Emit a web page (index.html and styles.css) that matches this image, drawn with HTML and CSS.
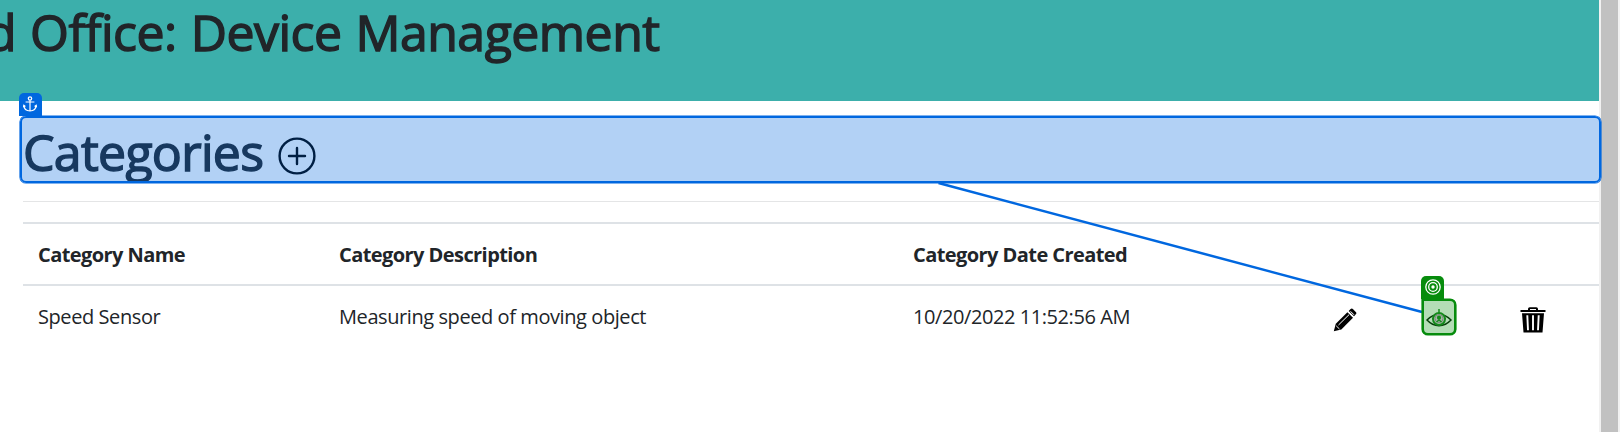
FILE: index.html
```html
<!DOCTYPE html>
<html lang="en">
<head>
<meta charset="utf-8">
<title>Device Management</title>
<link rel="stylesheet" href="styles.css">
</head>
<body>
<div class="window">
  <div class="page">
    <header class="banner"><h1 class="title">d Office: Device Management</h1></header>
    <main class="content">
      <div class="heading">
        <h1 class="subtitle">Categories</h1>
        <svg class="plus" viewBox="0 0 38 38"><circle cx="19" cy="19" r="17.4"/><path d="M19 11v16M11 19h16"/></svg>
      </div>
      <hr class="rule">
      <div class="table">
        <div class="row head">
          <span>Category Name</span><span>Category Description</span><span>Category Date Created</span>
        </div>
        <div class="row">
          <span>Speed Sensor</span><span>Measuring speed of moving object</span><span>10/20/2022 11:52:56 AM</span>
          <svg class="pencil" viewBox="0 0 24 24"><path d="M.8 23.300 2.800 15.800 14.400 4.200 20 9.800 8.300 21.400z"/><path d="m15.700 3 1.900-1.900c.8-.8 1.700-.7 2.500.1l2.700 2.700c.8.8.8 1.600 0 2.400L21 8.200z"/><path class="shine" d="M5.500 17 16 6.700M3.200 17.800l3.300 3.200M17.500 3.300l3.500 3.500"/></svg>
          <svg class="trash" viewBox="0 0 26 26"><path d="M.5 3H8V2q0-1.700 1.700-1.700h6.600Q18 .3 18 2v1h7.500v2H.5zM10 2v1h6V2zM2 6.300h22L22.500 25.500h-19z" fill-rule="evenodd"/><path class="slots" d="m7.300 8.300.7 15M13 8.300v15M18.700 8.300l-.7 15"/></svg>
        </div>
      </div>
    </main>
  </div>
  <div class="scrollbar"></div>
</div>
<svg class="connector" viewBox="0 0 1620 432"><path d="M938.500 183 1422 312"/></svg>
<div class="anchor-box"></div>
<div class="anchor-tag"><svg viewBox="0 0 14 16"><circle cx="7" cy="2.500" r="1.700"/><path d="M7 4.300V15M2.600 6h8.800M.8 9.300C1 13 3.800 15 7 15s6-2 6.200-5.700M.3 11.200l.5-2 1.600 1.300M13.700 11.200l-.5-2-1.600 1.300"/></svg></div>
<div class="target-box"><svg viewBox="0 0 26 20"><path class="eye" d="M1 11C8 3.500 18 3.500 25 11 18 18.500 8 18.500 1 11z"/><circle class="iris" cx="13" cy="10" r="6"/><circle class="ring" cx="13" cy="9.500" r="4"/><circle class="pupil" cx="13" cy="8.700" r="2.100"/><path class="cross" d="M13 0v4M6 9.500h2M18 9.500h2M10.500 13l2.500-2 2.500 2"/></svg></div>
<div class="target-tag"><svg viewBox="0 0 16 16"><circle cx="8" cy="8" r="7.200"/><circle cx="8" cy="8" r="4.300"/><circle class="dot" cx="8" cy="8" r="1.700"/></svg></div>
</body>
</html>
```
FILE: styles.css
```css
* { box-sizing: border-box; }
body { margin: 0; overflow: hidden; background: #fff; color: #212529; font-family: "Open Sans", "Noto Sans", sans-serif; }
svg { display: block; }
.window { display: flex; height: 432px; }
.page { width: 1599px; overflow: hidden; }
.scrollbar { width: 21px; background: #c1c1c1; border: solid #f1f1f1; border-width: 0 2px; }
.banner { height: 101px; background: #3cafab; overflow: hidden; }
.title, .subtitle { margin: 0; font-size: 50px; line-height: 60px; font-weight: 400; white-space: nowrap; -webkit-text-stroke: 1.400px currentColor; }
.title { margin: 2px 0 0 -14px; letter-spacing: -0.520px; word-spacing: 1.500px; }
.content { padding: 22px 0 0 23px; }
.heading { display: flex; height: 60px; }
.subtitle { width: 254.500px; height: 60px; overflow: hidden; margin: -1px 0 0 0; letter-spacing: -0.700px; }
.plus { width: 38px; height: 38px; margin-top: 14px; fill: none; stroke: #000; stroke-width: 2.400; stroke-linecap: round; }
.rule { margin: 18px 0 20px; height: 1px; border: 0; background: #e4e5e6; }
.row { display: grid; grid-template-columns: 301px 574px 420px 187px 1fr; height: 60px; padding: 1px 0 0 15px; align-items: center; font-size: 20px; line-height: 30px; letter-spacing: -0.420px; white-space: nowrap; }
.head { height: 64px; border: solid #dee2e6; border-width: 2px 0; font-weight: 700; letter-spacing: -0.570px; }
.pencil { width: 24px; height: 24px; margin-top: 6px; }
.trash { width: 26px; height: 26px; margin-top: 6px; }
.shine, .slots { fill: none; stroke: #fff; stroke-width: 1; }
.slots { stroke-width: 1.900; }
.connector { position: absolute; left: 0; top: 0; width: 1620px; height: 432px; fill: none; stroke: #0067df; stroke-width: 2.500; }
.anchor-box { position: absolute; left: 20px; top: 116px; width: 1581px; height: 67px; border: 2px solid #0067df; border-radius: 6px; background: rgba(0, 103, 223, .3); box-shadow: 0 0 0 .6px #0067df; }
.anchor-tag { position: absolute; left: 19px; top: 93px; width: 23px; height: 23px; padding: 3px 0 0 4px; border-radius: 5px 5px 0 0; background: #0067df; }
.anchor-tag svg { width: 14px; height: 16px; fill: none; stroke: #fff; stroke-width: 1.200; }
.target-box { position: absolute; left: 1422px; top: 299px; width: 34px; height: 36px; padding: 8px 0 0 2px; border: 2px solid #078c0d; border-radius: 0 6px 6px 6px; background: #b4ddb6; box-shadow: 0 0 0 .6px #078c0d; }
.target-box svg { width: 26px; height: 20px; fill: none; }
.eye { stroke: #063e09; stroke-width: 1.500; }
.iris { stroke: #148a1b; stroke-width: 2; fill: #a5b9a6; }
.ring { stroke: #798b7a; stroke-width: 1; }
.pupil { fill: #148a1b; }
.cross { stroke: #148a1b; stroke-width: 1.500; }
.target-tag { position: absolute; left: 1421px; top: 276px; width: 23px; height: 23px; padding: 3px 0 0 4px; border-radius: 5px 5px 0 0; background: #078c0d; }
.target-tag svg { width: 16px; height: 16px; fill: none; stroke: #fff; stroke-width: 1.300; }
.target-tag .dot { fill: #fff; stroke: none; }
```
